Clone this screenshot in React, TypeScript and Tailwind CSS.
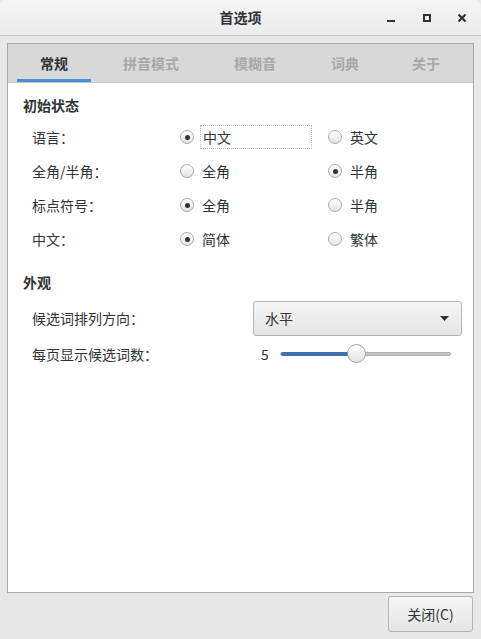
import React from 'react'

const tabs = [
    { label: '常规', w: 'w-[74px]', active: true },
    { label: '拼音模式', w: 'w-[120px]', active: false },
    { label: '模糊音', w: 'w-[88px]', active: false },
    { label: '词典', w: 'w-[92px]', active: false },
    { label: '关于', w: 'w-[70px]', active: false },
]

const Radio = ({ checked }: { checked: boolean }) => (
    <span className="flex items-center justify-center w-[14px] h-[14px] rounded-full border border-[#a9a9a9] bg-gradient-to-b from-white to-[#e4e4e4] shadow-[inset_0_1px_0_#fff]">
        {checked && <span className="block w-[5px] h-[5px] rounded-full bg-[#2e3436]"></span>}
    </span>
)

interface RowProps {
    label: string
    a: string
    b: string
    checked: 'a' | 'b'
    focus?: boolean
}

const RadioRow = ({ label, a, b, checked, focus }: RowProps) => (
    <div className="flex items-center h-[34px] pl-[24px]">
        <span className="w-[148px]">{label}</span>
        <span className="flex items-center w-[148px]">
            <Radio checked={checked === 'a'} />
            {focus ? (
                <span className="ml-[6px] w-[112px] h-[24px] flex items-center pl-[2px] border border-dotted border-[#b8b8b8]">{a}</span>
            ) : (
                <span className="ml-[8px]">{a}</span>
            )}
        </span>
        <span className="flex items-center">
            <Radio checked={checked === 'b'} />
            <span className="ml-[8px]">{b}</span>
        </span>
    </div>
)

export default function App() {
    return (
        <div className="w-[481px] h-[639px] bg-[#e8e8e8] flex flex-col text-[14px] text-[#2e3436] font-['Noto_Sans_CJK_SC','Noto_Sans',sans-serif] overflow-hidden">

            {/* Title bar */}
            <div className="relative h-[36px] shrink-0 bg-gradient-to-b from-[#f4f4f4] to-[#ececec] border-b border-[#c4c4c4] flex items-center justify-center rounded-t-[6px]">
                <span className="font-bold">首选项</span>
                <div className="absolute right-0 top-0 h-full flex items-center">
                    <span className="w-[36px] flex justify-center">
                        <span className="block w-[8px] h-[2px] mt-[6px] bg-[#2e3436]"></span>
                    </span>
                    <span className="w-[36px] flex justify-center">
                        <span className="block w-[8px] h-[8px] border-2 border-[#2e3436]"></span>
                    </span>
                    <span className="w-[34px] flex justify-center mr-[2px]">
                        <svg width="10" height="10" viewBox="0 0 10 10">
                            <path d="M1.5 1.5 L8.5 8.5 M8.5 1.5 L1.5 8.5" stroke="#2e3436" strokeWidth="2.2" />
                        </svg>
                    </span>
                </div>
            </div>

            {/* Notebook */}
            <div className="px-[7px] pt-[7px]">
                <div className="h-[550px] border border-[#a9a9a9] flex flex-col bg-white">
                    <div className="h-[39px] shrink-0 bg-[#d8d8d8] border-b border-[#c4c4c4] flex pl-[9px]">
                        {tabs.map((tab) => (
                            <div
                                key={tab.label}
                                className={`${tab.w} flex items-center justify-center font-bold ${tab.active ? 'text-[#2e3436] border-b-[3px] border-[#4a90d9] pt-[3px]' : 'text-[#a8a8a8]'}`}
                            >
                                {tab.label}
                            </div>
                        ))}
                    </div>

                    <div className="flex flex-col pt-[12px]">
                        <div className="h-[20px] flex items-center pl-[15px] font-bold">初始状态</div>
                        <div className="mt-[5px]">
                            <RadioRow label="语言：" a="中文" b="英文" checked="a" focus />
                            <RadioRow label="全角/半角：" a="全角" b="半角" checked="b" />
                            <RadioRow label="标点符号：" a="全角" b="半角" checked="a" />
                            <RadioRow label="中文：" a="简体" b="繁体" checked="a" />
                        </div>

                        <div className="h-[20px] mt-[16px] flex items-center pl-[15px] font-bold">外观</div>

                        <div className="mt-[9px] h-[35px] flex items-center pl-[24px]">
                            <span className="w-[221px]">候选词排列方向：</span>
                            <div className="w-[209px] h-[35px] rounded-[3px] border border-[#b4b4b4] bg-gradient-to-b from-[#f5f5f5] to-[#e5e5e5] flex items-center justify-between pl-[11px] pr-[12px]">
                                <span>水平</span>
                                <svg width="9" height="5" viewBox="0 0 9 5">
                                    <path d="M0 0 H9 L4.5 5 Z" fill="#2e3436" />
                                </svg>
                            </div>
                        </div>

                        <div className="mt-[1px] h-[34px] flex items-center pl-[24px]">
                            <span className="w-[229px]">每页显示候选词数：</span>
                            <span className="w-[19px]">5</span>
                            <div className="relative w-[171px] h-[4px] rounded-full bg-[#c4c4c4] border border-[#b0b0b0]">
                                <div className="absolute left-0 top-[-1px] h-[4px] w-[70px] rounded-full bg-[#3f6fae]"></div>
                                <div className="absolute left-[66px] top-[-9px] w-[19px] h-[19px] rounded-full border border-[#a4a4a4] bg-gradient-to-b from-white to-[#e2e2e2]"></div>
                            </div>
                        </div>
                    </div>
                </div>
            </div>

            {/* Bottom button */}
            <div className="flex justify-end pr-[8px] pt-[3px]">
                <button className="w-[85px] h-[36px] rounded-[3px] border border-[#b4b4b4] bg-gradient-to-b from-[#f5f5f5] to-[#e5e5e5] flex items-center justify-center">
                    关闭(C)
                </button>
            </div>
        </div>
    )
}
